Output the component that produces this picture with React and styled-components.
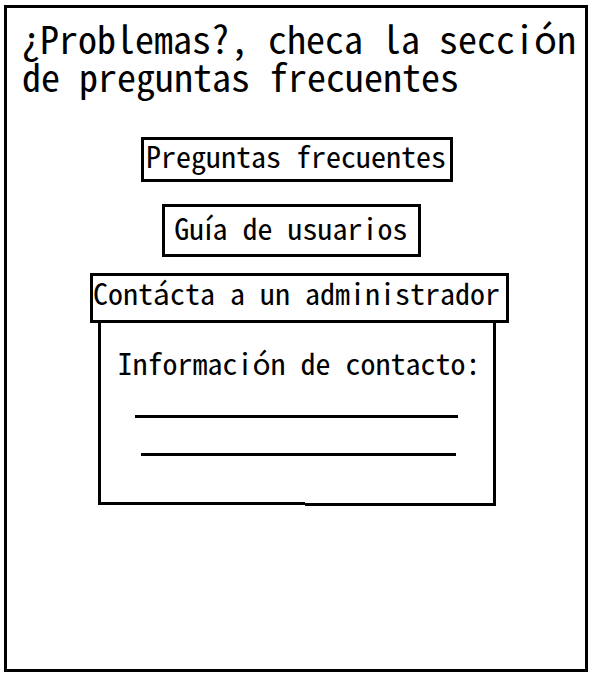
import React, { useState } from "react";
import styled, { createGlobalStyle } from "styled-components";

const GlobalStyle = createGlobalStyle`
  *, *::before, *::after { box-sizing: border-box; }
  body {
    margin: 0;
    background: #fff;
    color: #000;
    font-family: "Noto Sans Mono CJK JP", "Liberation Mono", monospace;
  }
`;

const Frame = styled.main`
  min-height: calc(100vh - 11px);
  margin: 5px 8px 6px 4px;
  border: 3px solid #000;
`;

const Title = styled.h1`
  margin: 0;
  padding: 11px 8px 0 15px;
  font-size: 38px;
  font-weight: 400;
  line-height: 38px;
`;

const Options = styled.nav`
  display: flex;
  flex-direction: column;
  padding-top: 42px;
`;

const Row = styled.div`
  display: grid;
  grid-template-columns: ${(p) => p.$before}fr auto ${(p) => p.$after}fr;
  margin-bottom: ${(p) => p.$gap || 0}px;

  > * { grid-column: 2; }
`;

const OptionButton = styled.button`
  padding: ${(p) => p.$pad};
  border: 3px solid #000;
  border-radius: 0;
  background: #fff;
  color: inherit;
  font: inherit;
  font-size: 30px;
  line-height: 30px;
  text-align: left;
  cursor: pointer;
`;

const Panel = styled.section`
  display: flex;
  flex-direction: column;
`;

const PanelBody = styled.div`
  padding: 24px 12px 46px 16px;
  border: solid #000;
  border-width: 0 3px;
`;

const PanelTitle = styled.h2`
  margin: 0;
  font-size: 30px;
  font-weight: 400;
  line-height: 30px;
`;

const Blank = styled.hr`
  height: 3px;
  margin: ${(p) => p.$margin};
  border: 0;
  background: #000;
`;

const PanelEdge = styled.div`
  display: grid;
  grid-template-columns: 207fr 188fr;
  height: 4px;
  border-right: 3px solid #000;

  &::before, &::after {
    content: "";
    height: 3px;
    background: #000;
  }
  &::after { align-self: end; }
`;

export default function App() {
  const [open, setOpen] = useState(true);
  return (
    <>
      <GlobalStyle />
      <Frame>
        <Title>¿Problemas?, checa la sección de preguntas frecuentes</Title>
        <Options>
          <Row $before={134} $after={132} $gap={22}>
            <OptionButton type="button" $pad="0 4px 9px 2px">Preguntas frecuentes</OptionButton>
          </Row>
          <Row $before={155} $after={164} $gap={16}>
            <OptionButton type="button" $pad="5px 10px 12px 9px">Guía de usuarios</OptionButton>
          </Row>
          <Row $before={83} $after={76}>
            <OptionButton
              type="button"
              $pad="1px 6px 13px 0"
              aria-expanded={open}
              aria-controls="contacto"
              onClick={() => setOpen(!open)}
            >
              Contácta a un administrador
            </OptionButton>
          </Row>
        </Options>
        {open && (
          <Row $before={91} $after={89}>
            <Panel id="contacto">
              <PanelBody>
                <PanelTitle>Información de contacto:</PanelTitle>
                <Blank $margin="38px 23px 0 18px" />
                <Blank $margin="35px 25px 0 24px" />
              </PanelBody>
              <PanelEdge />
            </Panel>
          </Row>
        )}
      </Frame>
    </>
  );
}
